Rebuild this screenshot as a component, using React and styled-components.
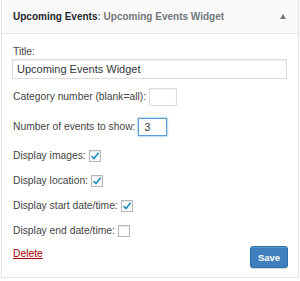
import React from "react";
import styled, { createGlobalStyle } from "styled-components";

const Global = createGlobalStyle`
  html, body { margin: 0; padding: 0; background: #fff; }
  body { font-family: "Liberation Sans", Arial, sans-serif; color: #444; }
`;

const Page = styled.div`
  padding: 0 1px;
`;

const Widget = styled.div`
  width: 298px;
  box-sizing: border-box;
  border: 1px solid #e5e5e5;
  border-top: none;
  background: #fff;
`;

const Header = styled.div`
  height: 34px;
  box-sizing: border-box;
  display: flex;
  align-items: center;
  justify-content: space-between;
  padding: 0 12px 1px 11px;
  background: #fafafa;
  border-bottom: 1px solid #e5e5e5;
`;

const HeaderTitle = styled.h3`
  margin: 0;
  font-size: 10px;
  font-weight: 700;
  color: #23282d;
  white-space: nowrap;
`;

const HeaderSub = styled.span`
  font-weight: 700;
  color: #72777c;
`;

const Arrow = styled.span`
  width: 0;
  height: 0;
  border-left: 3.5px solid transparent;
  border-right: 3.5px solid transparent;
  border-bottom: 5px solid #72777c;
`;

const Body = styled.div`
  padding: 11px 10px 9px 10px;
  font-size: 10.3px;
  color: #444;
`;

const Field = styled.div`
  display: flex;
  flex-direction: ${(p) => (p.$stack ? "column" : "row")};
  align-items: ${(p) => (p.$stack ? "stretch" : "center")};
  gap: ${(p) => (p.$stack ? "0" : "3px")};
  height: ${(p) => (p.$stack ? "auto" : "18px")};
  margin-bottom: ${(p) => p.$mb ?? 7}px;
  padding-left: 1px;
`;

const Label = styled.label`
  line-height: 14px;
  white-space: nowrap;
`;

const TextInput = styled.input`
  box-sizing: border-box;
  width: ${(p) => p.$w || "275px"};
  height: ${(p) => p.$h || 18}px;
  margin: 0 0 0 ${(p) => (p.$wide ? "-1px" : "0")};
  padding: 0 ${(p) => (p.$wide ? 4 : 5)}px;
  font-family: inherit;
  font-size: ${(p) => (p.$wide ? "11px" : "10.5px")};
  color: #32373c;
  border: 1px solid ${(p) => (p.$focus ? "#5b9dd9" : "#ddd")};
  box-shadow: ${(p) =>
    p.$focus ? "0 0 2px rgba(30,140,190,.8)" : "inset 0 1px 2px rgba(0,0,0,.07)"};
  border-radius: 0;
  outline: none;
  background: #fff;
`;

const Check = styled.span`
  box-sizing: border-box;
  width: 12px;
  height: 12px;
  border: 1px solid #b4b9be;
  box-shadow: inset 0 1px 2px rgba(0,0,0,.1);
  background: #fff;
  display: inline-flex;
  align-items: center;
  justify-content: center;
`;

const Footer = styled.div`
  display: flex;
  justify-content: space-between;
  align-items: center;
  height: 22px;
  margin-top: -1px;
  padding-left: 1px;
`;

const DeleteLink = styled.a`
  color: #a00;
  text-decoration: underline;
  font-size: 10.3px;
  cursor: pointer;
  margin-top: -8px;
`;

const SaveButton = styled.button`
  box-sizing: border-box;
  height: 22px;
  width: 38px;
  padding: 0;
  font-family: inherit;
  font-size: 9.5px;
  font-weight: 700;
  color: #fff;
  background: #3f7fbd;
  border: 1px solid #2f6da8;
  border-radius: 3px;
  box-shadow: inset 0 1px 0 rgba(120,200,230,.4), 0 1px 0 rgba(0,0,0,.15);
`;

const Tick = () => (
  <svg width="10" height="10" viewBox="0 0 10 10">
    <path d="M1.5 5.2 L4 7.6 L8.6 1.8" fill="none" stroke="#1e8cbe" strokeWidth="1.6" />
  </svg>
);

const CheckField = ({ label, checked }) => (
  <Field $mb={7}>
    <Label>{label}</Label>
    <Check>{checked && <Tick />}</Check>
  </Field>
);

export default function App() {
  return (
    <Page>
      <Global />
      <Widget>
        <Header>
          <HeaderTitle>
            Upcoming Events<HeaderSub>: Upcoming Events Widget</HeaderSub>
          </HeaderTitle>
          <Arrow />
        </Header>
        <Body>
          <Field $stack $mb={9}>
            <Label>Title:</Label>
            <TextInput defaultValue="Upcoming Events Widget" $h={20} $wide />
          </Field>
          <Field $mb={12}>
            <Label>Category number (blank=all):</Label>
            <TextInput $w="28px" />
          </Field>
          <Field $mb={11}>
            <Label>Number of events to show:</Label>
            <TextInput $w="29px" $focus defaultValue="3" />
          </Field>
          <CheckField label="Display images:" checked />
          <CheckField label="Display location:" checked />
          <CheckField label="Display start date/time:" checked />
          <CheckField label="Display end date/time:" />
          <Footer>
            <DeleteLink>Delete</DeleteLink>
            <SaveButton>Save</SaveButton>
          </Footer>
        </Body>
      </Widget>
    </Page>
  );
}
